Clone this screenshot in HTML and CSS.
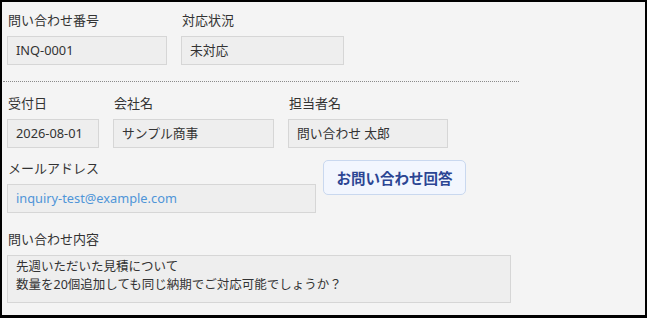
FILE: index.html
```html
<!DOCTYPE html>
<html lang="ja">
<head>
  <meta charset="UTF-8" />
  <meta name="viewport" content="width=device-width, initial-scale=1.0"/>
  <title>問い合わせ詳細</title>
  <link rel="stylesheet" href="styles.css">
</head>
<body>
  <div class="frame">
    <div class="panel">

      <div class="row">
        <div class="field w-160">
          <div class="label">問い合わせ番号</div>
          <div class="value">INQ-0001</div>
        </div>
        <div class="field w-163">
          <div class="label">対応状況</div>
          <div class="value">未対応</div>
        </div>
      </div>

      <div class="divider"></div>

      <div class="row row-2">
        <div class="field w-92">
          <div class="label">受付日</div>
          <div class="value">2026-08-01</div>
        </div>
        <div class="field w-161">
          <div class="label">会社名</div>
          <div class="value">サンプル商事</div>
        </div>
        <div class="field w-160">
          <div class="label">担当者名</div>
          <div class="value">問い合わせ 太郎</div>
        </div>
      </div>

      <div class="row row-3">
        <div class="field w-309">
          <div class="label">メールアドレス</div>
          <div class="value mail">inquiry-test@example.com</div>
        </div>
        <button class="answer-btn" type="button">お問い合わせ回答</button>
      </div>

      <div class="row row-4">
        <div class="field w-504">
          <div class="label">問い合わせ内容</div>
          <div class="value memo">先週いただいた見積について<br>数量を20個追加しても同じ納期でご対応可能でしょうか？</div>
        </div>
      </div>

    </div>
  </div>
</body>
</html>
```

FILE: styles.css
```css
* {
  box-sizing: border-box;
}

body {
  margin: 0;
  background-color: #000;
  font-family: "Noto Sans", "Noto Sans CJK JP", sans-serif;
  color: #333;
}

.frame {
  width: 647px;
  height: 318px;
  border-style: solid;
  border-color: #000;
  border-width: 2px 2px 3px 2px;
  background-color: #f4f4f4;
}

.panel {
  padding: 8px 5px 0 5px;
}

.row {
  display: flex;
  gap: 14px;
}

.row-2 {
  margin-top: 11px;
}

.row-3 {
  margin-top: 10px;
  gap: 7px;
  align-items: flex-start;
}

.row-4 {
  margin-top: 16px;
}

.field {
  display: flex;
  flex-direction: column;
}

.w-92 { width: 92px; }
.w-160 { width: 160px; }
.w-161 { width: 161px; }
.w-163 { width: 163px; }
.w-309 { width: 309px; }
.w-504 { width: 504px; }

.label {
  font-size: 13px;
  line-height: 20px;
  padding-left: 1px;
  margin-bottom: 6px;
  color: #333;
}

.value {
  height: 29px;
  padding: 0 8px;
  font-size: 12.8px;
  line-height: 27px;
  background-color: #eeeeee;
  border: 1px solid #d6d6d6;
  white-space: nowrap;
}

.value.mail {
  color: #4f95d8;
}

.value.memo {
  height: 48px;
  padding: 2px 8px 0 8px;
  font-size: 12.5px;
  line-height: 18px;
}

.divider {
  margin: 16px 0 0 -4px;
  width: 516px;
  border-top: 1px dotted #8a8a8a;
}

.answer-btn {
  margin-top: 2px;
  width: 143px;
  height: 35px;
  padding: 0;
  font-family: inherit;
  font-size: 14.5px;
  font-weight: bold;
  color: #2b4593;
  background-color: #f2f6fe;
  border: 1px solid #c9d8ef;
  border-radius: 5px;
}
```
